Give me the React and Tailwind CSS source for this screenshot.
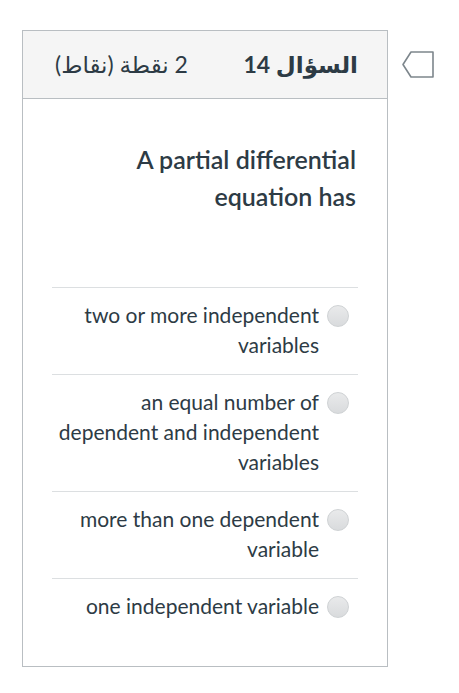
import React from 'react';

const answers = [
  'two or more independent variables',
  'an equal number of dependent and independent variables',
  'more than one dependent variable',
  'one independent variable',
];

function Flag() {
  return (
    <svg width="34" height="29" viewBox="0 0 34 29" className="mt-[20px] ml-[13px]">
      <path d="M32 2 H10 L2 14.5 L10 27 H32 Z" fill="none" stroke="#7d868c" strokeWidth="1.6" strokeLinejoin="round" />
    </svg>
  );
}

function Radio() {
  return (
    <span className="mt-[5px] shrink-0 w-[22px] h-[22px] rounded-full border border-[#cfd2d4] bg-gradient-to-b from-[#e9eaeb] to-[#d9dbdd]" />
  );
}

export default function App() {
  return (
    <div className="w-[459px] min-h-[693px] bg-white pt-[30px] pl-[22px] flex items-start" style={{ fontFamily: 'Lato, "DejaVu Sans", sans-serif' }}>
      <div className="w-[366px] border border-[#b9bec2] text-[#2d3b45]">
        <div dir="rtl" className="h-[68px] bg-[#f5f5f5] border-b border-[#b9bec2] flex items-center justify-between pr-[29px] pl-[32px]">
          <span className="text-[23px] font-bold">السؤال 14</span>
          <span className="text-[23px]">2 نقطة (نقاط)</span>
        </div>
        <div className="px-[29px] pt-[42px] pb-[31px]">
          <p className="text-[25px] font-semibold leading-[37px] text-right pl-[20px] pr-[2px]">A partial differential equation has</p>
          <div className="mt-[72px]">
            {answers.map((a) => (
              <div key={a} className="border-t border-[#dcdfe1] flex justify-end gap-[8px] pt-[12px] pb-[14px] pr-[9px]">
                <span className="text-[21px] leading-[30px] text-right max-w-[262px]">{a}</span>
                <Radio />
              </div>
            ))}
          </div>
        </div>
      </div>
      <Flag />
    </div>
  );
}
